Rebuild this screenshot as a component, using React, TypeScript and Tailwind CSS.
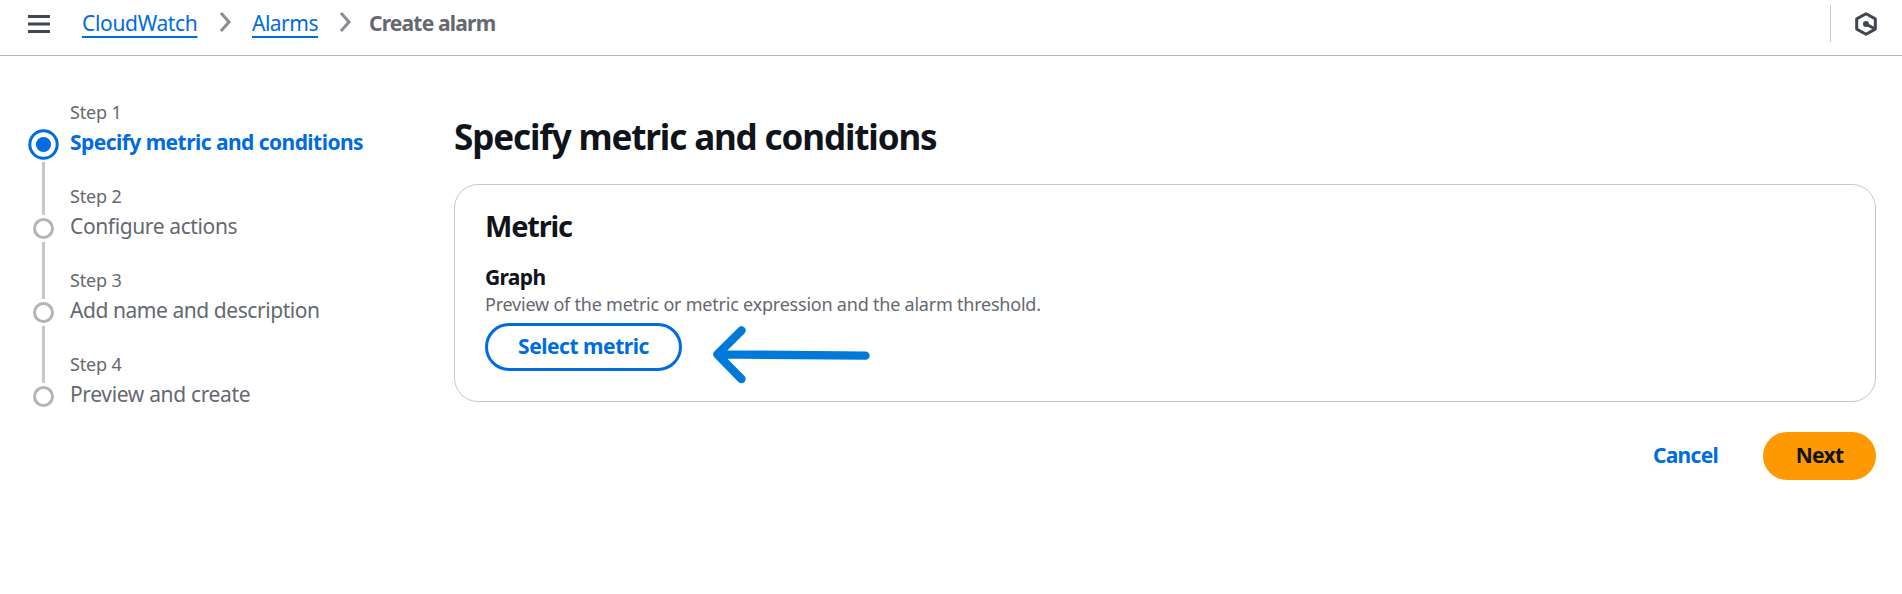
const inactiveSteps = [
  { n: 2, label: "Configure actions", track: "tracking-[-0.38px]" },
  { n: 3, label: "Add name and description", track: "tracking-[-0.44px]" },
  { n: 4, label: "Preview and create", track: "tracking-[-0.34px]" },
];

function Chevron() {
  return (
    <svg width="13" height="22" viewBox="0 0 13 22" fill="none" stroke="#8c8c94" strokeWidth="3">
      <path d="M2 2L10 11L2 20" />
    </svg>
  );
}

function Header() {
  return (
    <header className="flex h-14 shrink-0 border-b border-[#b4b4bb] pt-[5px] pr-[25px] pl-7 text-[21px] leading-[30px]">
      <svg className="mt-2.5" width="22" height="18" viewBox="0 0 22 18" fill="#424650">
        <path d="M0 0H22V3H0ZM0 7.5H22V10.5H0ZM0 15H22V18H0Z" />
      </svg>
      <nav className="ml-8 flex pt-[3px]">
        <a className="w-[116px] tracking-[-0.33px] whitespace-nowrap text-[#006ce0] underline decoration-2 underline-offset-[5px]">CloudWatch</a>
        <span className="ml-[21px] pt-[3px]"><Chevron /></span>
        <a className="ml-[20px] w-[66px] tracking-[-0.5px] whitespace-nowrap text-[#006ce0] underline decoration-2 underline-offset-[5px]">Alarms</a>
        <span className="ml-[21px] pt-[3px]"><Chevron /></span>
        <span className="ml-[17px] font-bold tracking-[-0.8px] whitespace-nowrap text-[#656871]">Create alarm</span>
      </nav>
      <div className="ml-auto flex">
        <div className="h-[37px] w-px bg-[#c6c6cd]" />
        <svg className="mt-[7px] ml-6" width="22" height="24" viewBox="0 0 22 24" fill="none" stroke="#424650" strokeWidth="3" strokeLinejoin="round">
          <path d="M11 1.8L20.3 6.9V17.1L11 22.2L1.7 17.1V6.9Z" />
          <path d="M11 12L20 17" />
          <circle cx="11" cy="12" r="3" fill="#424650" stroke="none" />
        </svg>
      </div>
    </header>
  );
}

function Ring() {
  return <div className="size-[21px] rounded-full border-3 border-[#b4b4bb]" />;
}

function Steps() {
  return (
    <aside className="flex w-[426px] shrink-0 pt-11 text-[#656871]">
      <div className="flex w-[31px] flex-col items-center gap-[3px] pt-[29px]">
        <svg width="31" height="31" viewBox="0 0 31 31">
          <circle cx="15.5" cy="15.5" r="13.7" fill="none" stroke="#006ce0" strokeWidth="3" />
          <circle cx="15.5" cy="15.5" r="7.6" fill="#006ce0" />
        </svg>
        <div className="-mt-px h-[53px] w-[3px] bg-[#c6c6cd]" />
        <Ring />
        <div className="h-[57px] w-[3px] bg-[#c6c6cd]" />
        <Ring />
        <div className="h-[57px] w-[3px] bg-[#c6c6cd]" />
        <Ring />
      </div>
      <ol className="ml-[11px] whitespace-nowrap">
        <li className="h-21">
          <div className="text-[18px] leading-6 tracking-[-0.15px]">Step 1</div>
          <div className="mt-[3px] text-[21px] leading-[30px] font-bold tracking-[-0.55px] text-[#006ce0]">Specify metric and conditions</div>
        </li>
        {inactiveSteps.map((s) => (
          <li key={s.n} className="h-21">
            <div className="text-[18px] leading-6 tracking-[-0.15px]">Step {s.n}</div>
            <div className={`mt-[3px] text-[21px] leading-[30px] ${s.track}`}>{s.label}</div>
          </li>
        ))}
      </ol>
    </aside>
  );
}

function Arrow() {
  return (
    <svg className="mt-[9px] ml-[30px]" width="160" height="60" viewBox="0 0 160 60" fill="none" stroke="#0079d9" strokeWidth="8.4" strokeLinecap="round" strokeLinejoin="round">
      <path d="M29.5 5.5L5.3 29.4L29.5 54M5.3 29.4L153.5 30.6" />
    </svg>
  );
}

export default function App() {
  return (
    <div className="flex h-[594px] flex-col bg-white font-['Noto_Sans',sans-serif] text-[#0f141a]">
      <Header />
      <div className="flex pr-[26px] pl-7">
        <Steps />
        <main className="flex-1 pt-[60px]">
          <h1 className="text-[35px] leading-[42px] font-bold tracking-[-1.12px]">Specify metric and conditions</h1>
          <section className="mt-[26px] h-[218px] rounded-3xl border border-[#c6c6cd] px-[30px] pt-[23px]">
            <h2 className="text-[29px] leading-9 font-bold tracking-[-1.2px]">Metric</h2>
            <h3 className="mt-[18px] text-[21px] leading-[30px] font-bold tracking-[-0.65px]">Graph</h3>
            <p className="text-[18px] leading-6 tracking-[-0.22px] text-[#656871]">Preview of the metric or metric expression and the alarm threshold.</p>
            <div className="flex h-[70px] items-start">
              <button className="mt-[7px] h-12 w-[197px] rounded-full border-3 border-[#006ce0] pb-[2px] text-[21px] leading-[30px] font-bold tracking-[-0.47px] text-[#006ce0]">Select metric</button>
              <Arrow />
            </div>
          </section>
          <div className="mt-[30px] flex justify-end text-[21px] leading-[30px] font-bold tracking-[-0.7px]">
            <button className="mr-[15px] h-12 w-[125px] pb-[2px] text-[#006ce0]">Cancel</button>
            <button className="h-12 w-[113px] rounded-full bg-[#ff9900] pb-[2px]">Next</button>
          </div>
        </main>
      </div>
    </div>
  );
}
